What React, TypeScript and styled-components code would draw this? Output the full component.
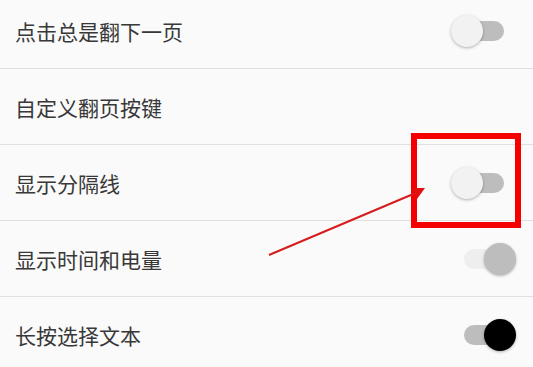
import styled, { createGlobalStyle } from 'styled-components';

const GlobalStyle = createGlobalStyle`
  html, body {
    margin: 0;
    padding: 0;
    background: #fafafa;
    overflow: hidden;
  }
  body {
    font-family: "Noto Sans CJK SC", "Noto Sans", sans-serif;
  }
`;

type SwitchState = 'off' | 'dim' | 'on';

const settings: Array<{ label: string; state?: SwitchState }> = [
  { label: '点击总是翻下一页', state: 'off' },
  { label: '自定义翻页按键' },
  { label: '显示分隔线', state: 'off' },
  { label: '显示时间和电量', state: 'dim' },
  { label: '长按选择文本', state: 'on' },
];

const Page = styled.div`
  position: relative;
  width: 533px;
  height: 367px;
  overflow: hidden;
  background: #fafafa;
`;

const List = styled.div`
  display: flex;
  flex-direction: column;
  margin-top: -7px;
`;

const Row = styled.div`
  display: flex;
  align-items: center;
  justify-content: space-between;
  height: 75px;
  padding: 0 29px 0 15px;
  border-bottom: 1px solid #e0e0e0;
`;

const Label = styled.span`
  font-size: 21px;
  color: #383838;
`;

const Track = styled.div<{ $state: SwitchState }>`
  display: flex;
  align-items: center;
  justify-content: ${p => (p.$state === 'off' ? 'flex-start' : 'flex-end')};
  width: 40px;
  height: 20px;
  border-radius: 10px;
  background: ${p => (p.$state === 'dim' ? '#eeeeee' : '#bdbdbd')};
`;

const Thumb = styled.div<{ $state: SwitchState }>`
  flex-shrink: 0;
  width: 32px;
  height: 32px;
  border-radius: 50%;
  margin: ${p => (p.$state === 'off' ? '0 0 0 -13px' : '0 -12px 0 0')};
  background: ${p =>
    p.$state === 'off' ? '#f2f2f2' : p.$state === 'dim' ? '#bdbdbd' : '#000000'};
  box-shadow: 0 1px 3px rgba(0, 0, 0, 0.3);
`;

const Highlight = styled.div`
  position: absolute;
  left: 411px;
  top: 133px;
  width: 98px;
  height: 83px;
  border: 6px solid #f50000;
`;

const Arrow = styled.svg`
  position: absolute;
  left: 0;
  top: 0;
  pointer-events: none;
`;

export default function App() {
  return (
    <Page>
      <GlobalStyle />
      <List>
        {settings.map(item => (
          <Row key={item.label}>
            <Label>{item.label}</Label>
            {item.state && (
              <Track $state={item.state}>
                <Thumb $state={item.state} />
              </Track>
            )}
          </Row>
        ))}
      </List>
      <Highlight />
      <Arrow width="533" height="367" viewBox="0 0 533 367">
        <line x1="269" y1="255" x2="418" y2="192" stroke="#d61c1c" strokeWidth="2" />
        <polygon points="425,188 412,188 417,199" fill="#e01010" />
      </Arrow>
    </Page>
  );
}
